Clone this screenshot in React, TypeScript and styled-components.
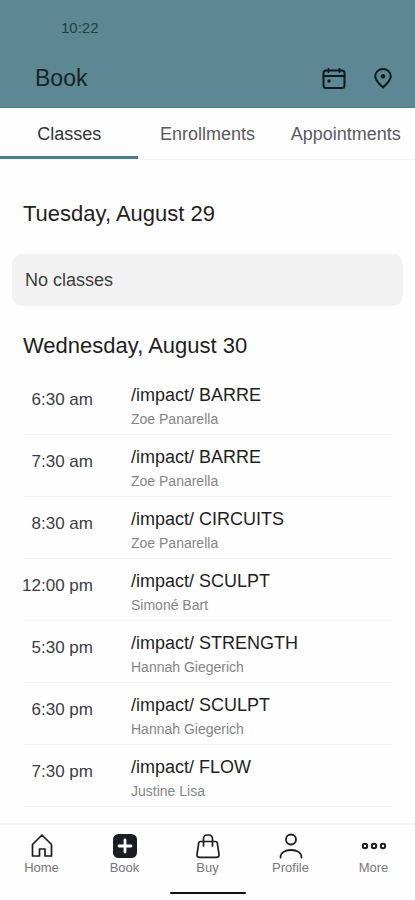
import React, { useState } from "react";
import styled, { createGlobalStyle } from "styled-components";

const GlobalStyle = createGlobalStyle`
  *, *::before, *::after { box-sizing: border-box; }
  body {
    margin: 0;
    background: #fefefe;
    color: #2b2b2e;
    font-family: "Liberation Sans", Arial, sans-serif;
  }
  button { font: inherit; border: 0; padding: 0; background: none; cursor: pointer; }
  h1, h2, p, ul { margin: 0; padding: 0; font-weight: 400; }
`;

const Screen = styled.div`
  display: flex;
  flex-direction: column;
  min-height: 100vh;
`;

const Header = styled.header`
  background: #5c8793;
  border-bottom: 1px solid #4c7b87;
  color: #16242b;
`;

const StatusBar = styled.div`
  padding: 18px 61px 0;
  font-size: 15px;
  line-height: 20px;
  color: #26404a;
`;

const TitleBar = styled.div`
  display: flex;
  align-items: center;
  justify-content: space-between;
  padding: 24px 20px 13px 35px;
`;

const Title = styled.h1`
  font-size: 23px;
  line-height: 32px;
`;

const Actions = styled.div`
  display: flex;
  gap: 25px;
`;

const IconButton = styled.button`
  display: flex;
  color: #0b1a22;
`;

const Tabs = styled.div`
  display: grid;
  grid-template-columns: repeat(3, 1fr);
  border-bottom: 1px solid #f4f4f4;
`;

const Tab = styled.button<{ $active: boolean }>`
  height: 51px;
  padding-top: 3px;
  border-bottom: 3px solid ${(p) => (p.$active ? "#4c7f8b" : "transparent")};
  font-size: 18px;
  line-height: 24px;
  white-space: nowrap;
  color: ${(p) => (p.$active ? "#333336" : "#5a5a5e")};
`;

const Main = styled.main`
  flex: 1;
  padding: 38px 12px 16px;
`;

const DayHeading = styled.h2`
  padding: 0 11px;
  font-size: 22px;
  line-height: 32px;
  color: #1f1f22;
`;

const EmptyCard = styled.p`
  margin: 24px 0;
  padding: 14px 13px;
  border-radius: 10px;
  background: #f2f2f2;
  font-size: 18px;
  line-height: 24px;
  color: #3c3c3f;
`;

const ClassList = styled.ul`
  margin: 11px 11px 0;
  list-style: none;
`;

const ClassRow = styled.li`
  display: grid;
  grid-template-columns: 70px 1fr;
  column-gap: 38px;
  height: 62px;
  border-bottom: 1px solid #f3f3f3;
`;

const Time = styled.time`
  display: flex;
  justify-content: flex-end;
  padding-top: 15px;
  font-size: 17px;
  line-height: 24px;
  white-space: nowrap;
  color: #3c3c3f;
`;

const Details = styled.div`
  padding-top: 10px;
`;

const ClassName = styled.p`
  font-size: 18px;
  line-height: 24px;
  color: #1f1f22;
`;

const Instructor = styled.p`
  font-size: 14px;
  line-height: 24px;
  color: #858588;
`;

const BottomBar = styled.footer`
  position: sticky;
  bottom: 0;
  border-top: 2px solid #f6f6f6;
  background: #fefefe;
`;

const Nav = styled.nav`
  display: grid;
  grid-template-columns: repeat(5, 1fr);
  padding: 7px 0 16px;
`;

const NavItem = styled.a`
  display: flex;
  flex-direction: column;
  align-items: center;
  font-size: 13px;
  line-height: 16px;
  text-decoration: none;
  color: #77777b;
  svg { color: #1b1b24; }
`;

const HomeIndicator = styled.div`
  width: 76px;
  height: 2px;
  margin: 0 auto 7px;
  border-radius: 1px;
  background: #111113;
`;

const CalendarIcon = () => (
  <svg width="24" height="24" viewBox="0 0 24 24" fill="none" stroke="currentColor" strokeWidth="2" strokeLinecap="round">
    <rect x="1.500" y="4.500" width="21" height="17.500" rx="2.500" />
    <path d="M1.500 10h21M6.500 3v3M17.500 3v3" />
    <circle cx="7" cy="15" r="1.700" fill="currentColor" stroke="none" />
  </svg>
);

const PinIcon = () => (
  <svg width="24" height="24" viewBox="0 0 24 24" fill="none" stroke="currentColor" strokeWidth="2" strokeLinejoin="round">
    <path d="M12 21.500C8.500 18 4.200 14.500 4.200 10.300a7.800 7.300 0 0 1 15.600 0C19.800 14.500 15.500 18 12 21.500Z" />
    <circle cx="12" cy="10.300" r="2.200" fill="currentColor" stroke="none" />
  </svg>
);

const HomeIcon = () => (
  <svg width="28" height="28" viewBox="0 0 28 28" fill="none" stroke="currentColor" strokeWidth="1.700" strokeLinejoin="round">
    <path d="M4.500 12.500 14 3 23.500 12.500V24H17V17H11.500V24H4.500Z" />
  </svg>
);

const BookIcon = () => (
  <svg width="28" height="28" viewBox="0 0 28 28">
    <rect x="2" y="2" width="24" height="24" rx="5.500" fill="currentColor" />
    <path d="M14 8v12M8 14h12" stroke="#fff" strokeWidth="2.800" strokeLinecap="round" />
  </svg>
);

const BagIcon = () => (
  <svg width="28" height="28" viewBox="0 0 28 28" fill="none" stroke="currentColor" strokeWidth="1.700" strokeLinecap="round" strokeLinejoin="round">
    <path d="M6.500 9.500H21.500Q23 9.500 23.300 11L25 22.500Q25.300 25.300 22.500 25.300H5.500Q2.700 25.300 3 22.500L4.700 11Q5 9.500 6.500 9.500Z" />
    <path d="M9.500 14V6.500a3.500 3.500 0 0 1 3.500-3.500h2a3.500 3.500 0 0 1 3.500 3.500V14" />
  </svg>
);

const ProfileIcon = () => (
  <svg width="28" height="28" viewBox="0 0 28 28" fill="none" stroke="currentColor" strokeWidth="1.800" strokeLinecap="round">
    <circle cx="14" cy="7.500" r="5" />
    <path d="M3.500 25.500C3.500 20.500 8 18 14 18S24.500 20.500 24.500 25.500" />
  </svg>
);

const MoreIcon = () => (
  <svg width="28" height="28" viewBox="0 0 28 28" fill="none" stroke="currentColor" strokeWidth="2">
    <circle cx="5" cy="14" r="2.200" />
    <circle cx="14" cy="14" r="2.200" />
    <circle cx="23" cy="14" r="2.200" />
  </svg>
);

const tabs = ["Classes", "Enrollments", "Appointments"];

const classes = [
  { time: "6:30 am", name: "/impact/ BARRE", instructor: "Zoe Panarella" },
  { time: "7:30 am", name: "/impact/ BARRE", instructor: "Zoe Panarella" },
  { time: "8:30 am", name: "/impact/ CIRCUITS", instructor: "Zoe Panarella" },
  { time: "12:00 pm", name: "/impact/ SCULPT", instructor: "Simoné Bart" },
  { time: "5:30 pm", name: "/impact/ STRENGTH", instructor: "Hannah Giegerich" },
  { time: "6:30 pm", name: "/impact/ SCULPT", instructor: "Hannah Giegerich" },
  { time: "7:30 pm", name: "/impact/ FLOW", instructor: "Justine Lisa" },
];

const navItems = [
  { label: "Home", Icon: HomeIcon },
  { label: "Book", Icon: BookIcon },
  { label: "Buy", Icon: BagIcon },
  { label: "Profile", Icon: ProfileIcon },
  { label: "More", Icon: MoreIcon },
];

export default function App() {
  const [active, setActive] = useState("Classes");
  return (
    <Screen>
      <GlobalStyle />
      <Header>
        <StatusBar>10:22</StatusBar>
        <TitleBar>
          <Title>Book</Title>
          <Actions>
            <IconButton aria-label="Calendar"><CalendarIcon /></IconButton>
            <IconButton aria-label="Location"><PinIcon /></IconButton>
          </Actions>
        </TitleBar>
      </Header>
      <Tabs role="tablist">
        {tabs.map((t) => (
          <Tab key={t} role="tab" aria-selected={t === active} $active={t === active} onClick={() => setActive(t)}>
            {t}
          </Tab>
        ))}
      </Tabs>
      <Main>
        <DayHeading>Tuesday, August 29</DayHeading>
        <EmptyCard>No classes</EmptyCard>
        <DayHeading>Wednesday, August 30</DayHeading>
        <ClassList>
          {classes.map((c) => (
            <ClassRow key={c.time}>
              <Time>{c.time}</Time>
              <Details>
                <ClassName>{c.name}</ClassName>
                <Instructor>{c.instructor}</Instructor>
              </Details>
            </ClassRow>
          ))}
        </ClassList>
      </Main>
      <BottomBar>
        <Nav>
          {navItems.map(({ label, Icon }) => (
            <NavItem key={label} href={`#${label.toLowerCase()}`}>
              <Icon />
              {label}
            </NavItem>
          ))}
        </Nav>
        <HomeIndicator />
      </BottomBar>
    </Screen>
  );
}
